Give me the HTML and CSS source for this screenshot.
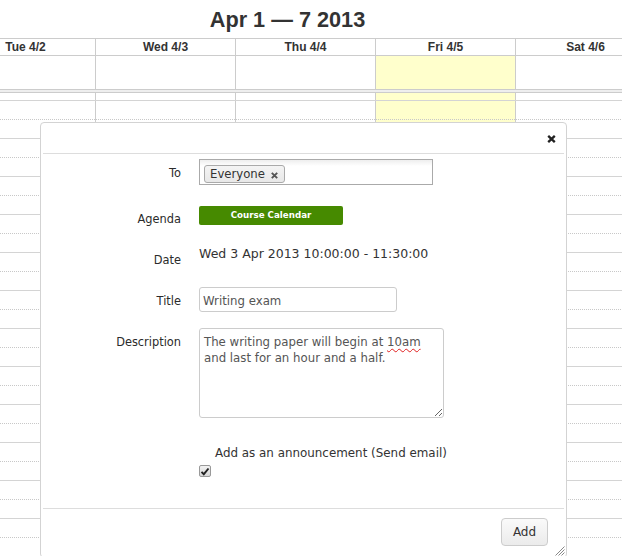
FILE: index.html
```html
<!DOCTYPE html>
<html lang="en">
<head>
<meta charset="utf-8">
<title>Calendar</title>
<link rel="stylesheet" href="styles.css">
</head>
<body>
<div class="cal">
  <h2 class="cal-title">Apr 1 — 7 2013</h2>
  <div class="cal-head">
    <div class="gutter"></div>
    <div class="day"></div>
    <div class="day">Tue 4/2</div>
    <div class="day">Wed 4/3</div>
    <div class="day">Thu 4/4</div>
    <div class="day">Fri 4/5</div>
    <div class="day">Sat 4/6</div>
    <div class="day"></div>
  </div>
  <div class="cal-allday">
    <div class="gutter"></div>
    <div class="cell"></div>
    <div class="cell"></div>
    <div class="cell"></div>
    <div class="cell"></div>
    <div class="cell today"></div>
    <div class="cell"></div>
    <div class="cell"></div>
  </div>
  <div class="cal-divider"></div>
  <div class="cal-slots">
    <div class="cal-days">
      <div class="gutter"></div>
      <div class="col"></div>
      <div class="col"></div>
      <div class="col"></div>
      <div class="col"></div>
      <div class="col today"></div>
      <div class="col"></div>
      <div class="col"></div>
    </div>
    <div class="cal-rows">
      <div class="slot"></div><div class="slot half"></div>
      <div class="slot"></div><div class="slot half"></div>
      <div class="slot"></div><div class="slot half"></div>
      <div class="slot"></div><div class="slot half"></div>
      <div class="slot"></div><div class="slot half"></div>
      <div class="slot"></div><div class="slot half"></div>
      <div class="slot"></div><div class="slot half"></div>
      <div class="slot"></div><div class="slot half"></div>
      <div class="slot"></div><div class="slot half"></div>
      <div class="slot"></div><div class="slot half"></div>
      <div class="slot"></div><div class="slot half"></div>
      <div class="slot"></div><div class="slot half"></div>
      <div class="slot"></div><div class="slot half"></div>
      <div class="slot"></div><div class="slot half"></div>
    </div>
  </div>
</div>

<div class="dialog">
  <div class="dialog-titlebar">
    <button class="dialog-close" aria-label="close">
      <svg width="9" height="8" viewBox="0 0 9 8"><path d="M1.2 0.8 L7.8 7.2 M7.8 0.8 L1.2 7.2" stroke="#222" stroke-width="2.3" stroke-linecap="butt" fill="none"/></svg>
    </button>
  </div>
  <div class="dialog-content">
    <div class="row row-to">
      <div class="lbl">To</div>
      <div class="chosen">
        <span class="token">Everyone<svg class="token-x" width="7" height="7" viewBox="0 0 7 7"><path d="M0.8 0.8 L6.2 6.2 M6.2 0.8 L0.8 6.2" stroke="#555" stroke-width="1.9" fill="none"/></svg></span>
      </div>
    </div>
    <div class="row row-agenda">
      <div class="lbl">Agenda</div>
      <div class="ctl"><span class="agenda-btn">Course Calendar</span></div>
    </div>
    <div class="row row-date">
      <div class="lbl">Date</div>
      <div class="date-val">Wed 3 Apr 2013 10:00:00 - 11:30:00</div>
    </div>
    <div class="row row-title">
      <div class="lbl">Title</div>
      <div class="ctl"><input class="text-input" type="text" value="Writing exam"></div>
    </div>
    <div class="row row-desc">
      <div class="lbl">Description</div>
      <div class="ctl"><div class="textarea">The writing paper will begin at <span class="misspelt">10am</span> and last for an hour and a half.</div></div>
    </div>
    <div class="row row-check">
      <div class="lbl"></div>
      <div class="ctl">
        <div class="check-text">Add as an announcement (Send email)</div>
        <span class="checkbox"><svg width="10" height="9" viewBox="0 0 10 9"><path d="M1.5 4.8 L3.8 7.2 L8.5 1.5" stroke="#222" stroke-width="1.9" fill="none"/></svg></span>
      </div>
    </div>
  </div>
  <div class="buttonpane">
    <button class="btn">Add</button>
  </div>
  <span class="resize-grip"><svg width="12" height="12" viewBox="0 0 12 12"><path d="M11.5 2.5 L2.5 11.5 M11.5 5.5 L5.5 11.5 M11.5 8.5 L8.5 11.5" stroke="#888" stroke-width="1" fill="none"/></svg></span>
</div>
</body>
</html>
```

FILE: styles.css
```css
html, body {
  margin: 0;
  height: 100%;
  overflow: hidden;
  background: #fff;
}
body {
  position: relative;
  font-family: "Liberation Sans", Arial, sans-serif;
  color: #333;
}

/* ---------- calendar ---------- */
.cal {
  margin-left: -220px;
  width: 1015px;
}
.cal-title {
  margin: 0 0 6px;
  padding-top: 7px;
  font-size: 21.7px;
  line-height: 25px;
  font-weight: bold;
  text-align: center;
  color: #333;
}
.cal-head,
.cal-allday,
.cal-days {
  display: grid;
  grid-template-columns: 35px repeat(7, 140px);
}
.cal-head {
  border-top: 1px solid #ccc;
  border-bottom: 1px solid #ccc;
}
.cal-head .day {
  border-left: 1px solid #ccc;
  height: 16px;
  line-height: 16px;
  font-size: 12px;
  font-weight: bold;
  text-align: center;
  color: #333;
}
.cal-allday {
  border-bottom: 1px solid #ccc;
}
.cal-allday .cell {
  height: 33px;
  border-left: 1px solid #ccc;
}
.today {
  background: #ffc;
}
.cal-divider {
  height: 2px;
  background: #eee;
  border-bottom: 1px solid #ccc;
}
.cal-slots {
  position: relative;
  height: 480px;
  overflow: hidden;
}
.cal-days {
  height: 100%;
}
.cal-days .col {
  border-left: 1px solid #ccc;
}
.cal-rows {
  position: absolute;
  top: -11px;
  left: 0;
  right: 0;
}
.slot {
  height: 19px;
  box-sizing: border-box;
  border-bottom: 1px solid #d4d4d4;
}
.slot.half {
  border-bottom: 1px dotted #c8c8c8;
}

/* ---------- dialog ---------- */
.dialog {
  position: absolute;
  left: 40px;
  top: 122px;
  width: 527px;
  box-sizing: border-box;
  padding: 2px;
  border: 1px solid #d3d3d3;
  border-radius: 4px;
  background: #fff;
  font-family: "DejaVu Sans", Verdana, sans-serif;
  color: #333;
}
.dialog-titlebar {
  height: 28px;
  border-bottom: 1px solid #ddd;
  display: flex;
  align-items: center;
  justify-content: flex-end;
  padding-right: 8px;
}
.dialog-close {
  display: block;
  width: 9px;
  height: 8px;
  padding: 0;
  margin: 0;
  border: 0;
  background: none;
}
.dialog-close svg {
  display: block;
}
.dialog-content {
  padding: 5px 0 31px;
}
.row {
  display: grid;
  grid-template-columns: 138px 1fr;
  column-gap: 18px;
  align-items: start;
}
.lbl {
  text-align: right;
  font-size: 11.4px;
  line-height: 14px;
  padding-top: 7px;
  color: #2b2b2b;
}
.row-agenda,
.row-date,
.row-title {
  margin-top: 20px;
}
.row-desc {
  margin-top: 16px;
}
.row-check {
  margin-top: 28px;
}
.row-check .lbl {
  padding-top: 0;
}

/* To (chosen style) */
.chosen {
  width: 234px;
  height: 26px;
  box-sizing: border-box;
  border: 1px solid #aaa;
  background: linear-gradient(#eee 0%, #fff 25%);
  padding: 3px 4px 0;
}
.token {
  display: inline-flex;
  align-items: flex-start;
  height: 18px;
  box-sizing: border-box;
  padding: 1px 6px 0 5px;
  border: 1px solid #aaa;
  border-radius: 3px;
  background: linear-gradient(#f4f4f4, #e8e8e8);
  font-size: 11.7px;
  line-height: 15px;
  color: #333;
}
.token-x {
  display: block;
  margin: 5px 0 0 6px;
}

/* Agenda */
.agenda-btn {
  display: block;
  width: 144px;
  height: 19px;
  margin-top: 1px;
  border-radius: 2px;
  background: #468a00;
  color: #fff;
  font-weight: bold;
  font-size: 8.7px;
  line-height: 19px;
  text-align: center;
}

/* Date */
.date-val {
  font-size: 12.5px;
  line-height: 15px;
  color: #333;
}

/* Title */
.text-input {
  display: block;
  width: 198px;
  height: 25px;
  box-sizing: border-box;
  margin: 0;
  padding: 6px 3px 3px;
  border: 1px solid #ccc;
  border-radius: 3px;
  font-family: "DejaVu Sans", Verdana, sans-serif;
  font-size: 11.75px;
  line-height: 14px;
  color: #555;
  background: #fff;
  outline: none;
}

/* Description */
.textarea {
  width: 245px;
  height: 90px;
  box-sizing: border-box;
  padding: 5px 4px;
  border: 1px solid #ccc;
  border-radius: 3px;
  font-size: 11.75px;
  line-height: 16px;
  color: #555;
  overflow: auto;
  resize: both;
}
.misspelt {
  text-decoration: underline wavy #e02020;
  text-decoration-thickness: 1px;
  text-underline-offset: 2px;
}

/* Checkbox */
.check-text {
  padding-left: 16px;
  font-size: 11.9px;
  line-height: 15px;
  color: #333;
}
.checkbox {
  display: flex;
  align-items: center;
  justify-content: center;
  width: 12px;
  height: 12px;
  box-sizing: border-box;
  margin-top: 4px;
  border: 1px solid #999;
  border-radius: 2px;
  background: linear-gradient(#f2f2f2, #d6d6d6);
}
.checkbox svg {
  display: block;
}

/* Buttons */
.buttonpane {
  border-top: 1px solid #ddd;
  display: flex;
  justify-content: flex-end;
  padding: 9px 16px 9px 0;
}
.btn {
  width: 47px;
  height: 28px;
  box-sizing: border-box;
  margin: 0;
  padding: 0;
  border: 1px solid #ccc;
  border-radius: 4px;
  background: linear-gradient(#fafafa, #ebebeb);
  font-family: "DejaVu Sans", Verdana, sans-serif;
  font-size: 12px;
  color: #333;
}
.resize-grip {
  position: absolute;
  right: 1px;
  bottom: 1px;
  width: 12px;
  height: 12px;
}
.resize-grip svg {
  display: block;
}
```
